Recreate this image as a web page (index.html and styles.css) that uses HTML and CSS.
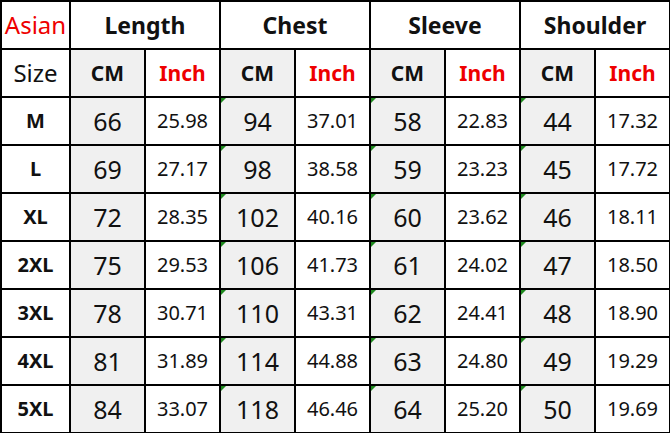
FILE: index.html
```html
<!DOCTYPE html>
<html>
<head>
<meta charset="utf-8">
<link rel="stylesheet" href="styles.css">
</head>
<body>
<div class="chart">
  <div class="cell asian">Asian</div>
  <div class="cell head span2">Length</div>
  <div class="cell head span2">Chest</div>
  <div class="cell head span2">Sleeve</div>
  <div class="cell head span2">Shoulder</div>

  <div class="cell sizehead">Size</div>
  <div class="cell unit cm">CM</div><div class="cell unit inch">Inch</div>
  <div class="cell unit cm">CM</div><div class="cell unit inch">Inch</div>
  <div class="cell unit cm">CM</div><div class="cell unit inch">Inch</div>
  <div class="cell unit cm">CM</div><div class="cell unit inch">Inch</div>

  <div class="cell size">M</div>
  <div class="cell cmv">66</div><div class="cell inv">25.98</div>
  <div class="cell cmv flag">94</div><div class="cell inv">37.01</div>
  <div class="cell cmv flag">58</div><div class="cell inv">22.83</div>
  <div class="cell cmv flag">44</div><div class="cell inv">17.32</div>

  <div class="cell size">L</div>
  <div class="cell cmv">69</div><div class="cell inv">27.17</div>
  <div class="cell cmv flag">98</div><div class="cell inv">38.58</div>
  <div class="cell cmv flag">59</div><div class="cell inv">23.23</div>
  <div class="cell cmv flag">45</div><div class="cell inv">17.72</div>

  <div class="cell size">XL</div>
  <div class="cell cmv">72</div><div class="cell inv">28.35</div>
  <div class="cell cmv flag">102</div><div class="cell inv">40.16</div>
  <div class="cell cmv flag">60</div><div class="cell inv">23.62</div>
  <div class="cell cmv flag">46</div><div class="cell inv">18.11</div>

  <div class="cell size">2XL</div>
  <div class="cell cmv">75</div><div class="cell inv">29.53</div>
  <div class="cell cmv flag">106</div><div class="cell inv">41.73</div>
  <div class="cell cmv flag">61</div><div class="cell inv">24.02</div>
  <div class="cell cmv flag">47</div><div class="cell inv">18.50</div>

  <div class="cell size">3XL</div>
  <div class="cell cmv">78</div><div class="cell inv">30.71</div>
  <div class="cell cmv flag">110</div><div class="cell inv">43.31</div>
  <div class="cell cmv flag">62</div><div class="cell inv">24.41</div>
  <div class="cell cmv flag">48</div><div class="cell inv">18.90</div>

  <div class="cell size">4XL</div>
  <div class="cell cmv">81</div><div class="cell inv">31.89</div>
  <div class="cell cmv flag">114</div><div class="cell inv">44.88</div>
  <div class="cell cmv flag">63</div><div class="cell inv">24.80</div>
  <div class="cell cmv flag">49</div><div class="cell inv">19.29</div>

  <div class="cell size">5XL</div>
  <div class="cell cmv">84</div><div class="cell inv">33.07</div>
  <div class="cell cmv flag">118</div><div class="cell inv">46.46</div>
  <div class="cell cmv flag">64</div><div class="cell inv">25.20</div>
  <div class="cell cmv flag">50</div><div class="cell inv">19.69</div>
</div>
</body>
</html>
```

FILE: styles.css
```css
html, body {
  margin: 0;
  padding: 0;
  background: #ffffff;
}

.chart {
  display: grid;
  grid-template-columns: 67px repeat(8, 73px);
  grid-auto-rows: 46px;
  gap: 2px;
  padding: 1px 2px 2px 1px;
  border-top: 1px solid #000;
  border-left: 1px solid #000;
  width: max-content;
  background: #000;
  font-family: "Noto Sans", "Open Sans", sans-serif;
  color: #111;
}

.cell {
  background: #fff;
  display: flex;
  align-items: center;
  justify-content: center;
  position: relative;
  line-height: 1;
}

.span2 {
  grid-column: span 2;
}

.asian {
  color: #ee0000;
  font-size: 24px;
}

.head {
  font-weight: 700;
  font-size: 23px;
}

.sizehead {
  font-size: 24px;
}

.unit {
  font-weight: 700;
  font-size: 21px;
}

.unit.cm {
  background: #f0f0f0;
}

.unit.inch {
  color: #ee0000;
}

.size {
  font-weight: 700;
  font-size: 20px;
}

.cmv {
  background: #f0f0f0;
  font-size: 25px;
}

.inv {
  font-size: 20px;
}

.flag::before {
  content: "";
  position: absolute;
  top: 0;
  left: 0;
  width: 0;
  height: 0;
  border-top: 5px solid #1f8a1f;
  border-right: 5px solid transparent;
}
```
